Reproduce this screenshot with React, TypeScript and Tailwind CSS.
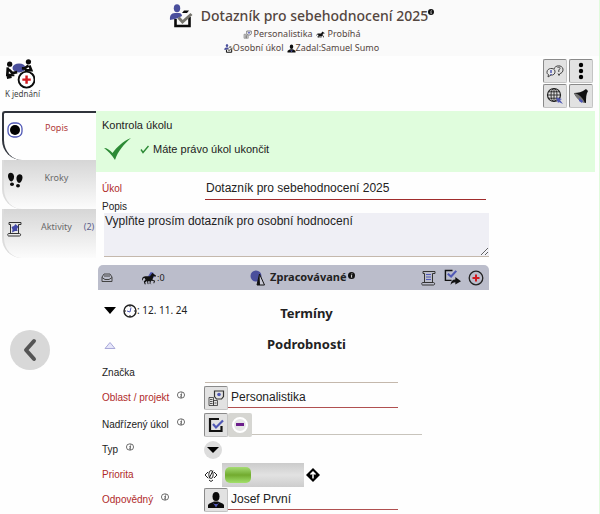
import type { ReactNode } from 'react';

interface IconProps {
  className?: string;
}

function TaskIcon({ className }: IconProps) {
  return (
    <svg viewBox="0 0 24 24" className={className} aria-hidden="true">
      <path d="M6.500 15v7h14v-9" fill="none" stroke="#0b0b0b" strokeWidth="2.600" />
      <path d="M13 9l2-2.500h5L18 9z" fill="#0b0b0b" />
      <ellipse cx="8" cy="4.200" rx="3.200" ry="4" fill="#4a4f9c" />
      <path d="M1 16c-.5-4 1-7 5-7h4c2 0 3 1.500 3 3l-4 2-3 1z" fill="#4a4f9c" />
      <path d="M9.500 13.500l4 4.500 9-8" fill="none" stroke="#77766f" strokeWidth="3" />
    </svg>
  );
}

function ProjectIcon({ className }: IconProps) {
  return (
    <svg viewBox="0 0 18 18" className={className} fill="none" stroke="#333" aria-hidden="true">
      <path d="M7.500 2h9v5.500l-2 2.500H9.500l-2-2.500z" strokeWidth="1.200" />
      <circle cx="12" cy="5.500" r="1.800" fill="#5058b5" stroke="none" />
      <path d="M2 8.500h4.500V16.500H2zM6.500 11.500h4v5h-4zM3 10.500h2.500M3 12.500h2.500M3 14.500h2.500M7.500 14h2" strokeWidth="0.800" />
    </svg>
  );
}

function HorseIcon({ className, accent }: IconProps & { accent?: boolean }) {
  return (
    <svg viewBox="0 0 18 16" className={className} aria-hidden="true">
      {accent && <path d="M8 6l3-5 3 1 1 5-4 2z" fill="#5058b5" />}
      <path
        d="M1 10c0-3 2-4 4-4h5l3-4 1 1 3 2-.5 1.500L14 6l-1 4 3 1-1 3h-1l.5-2.500-3-.5-2 1-3-.5-2 1.500 1 2H4L3 12l2-2-1-2c-2 0-2 1-2 3z"
        fill="#111"
      />
      <path d="M7 11l1 4M11 11l-1 3 1 1" stroke="#111" fill="none" />
    </svg>
  );
}

function PersonIcon({ className }: IconProps) {
  return (
    <svg viewBox="0 0 18 18" className={className} aria-hidden="true">
      <ellipse cx="9" cy="5.500" rx="3.500" ry="4.500" fill="#0b0b0b" />
      <path d="M1 17v-3c1-2 4-2.500 6-3.500h4c2 1 5 1.500 6 3.500v3z" fill="#0b0b0b" />
      <path d="M5.500 11l3.500 5.500 3.500-5.500-2 2h-3z" fill="#5058b5" />
    </svg>
  );
}

function MeetingIcon({ className }: IconProps) {
  return (
    <svg viewBox="0 0 32 32" className={className} aria-hidden="true">
      <ellipse cx="15" cy="9.500" rx="7" ry="4.800" fill="#4a4f9c" />
      <circle cx="5" cy="5.500" r="2.800" fill="#0b0b0b" />
      <circle cx="25" cy="3" r="2.800" fill="#0b0b0b" />
      <path d="M3 9l-.5 8H10M4 11l4 4 5-1M2 20l5-1M26 7l2 5h-7M25 7l-4 3-3 0" fill="none" stroke="#0b0b0b" strokeWidth="2.800" />
      <circle cx="23" cy="22" r="8.500" fill="#fff" stroke="#0b0b0b" strokeWidth="2" />
      <path d="M23 17.500v9M18.500 22h9" stroke="#d0191f" strokeWidth="2.600" />
    </svg>
  );
}

function ChatIcon() {
  return (
    <svg viewBox="0 0 18 18" className="size-[18px]" fill="none" stroke="#444" aria-hidden="true">
      <path d="M8 7c1-4 8-4.500 9 0 .5 3-2 4.500-3 4.500l-1 2-1-2" />
      <path d="M1 10c0-4 7-5 8-1 .5 3-2 4.500-4 4l-3 2 .5-2.500C1 12 1 11 1 10z" fill="#e8e8e8" />
      <path d="M5 8v3M5 12v1" stroke="#5058b5" strokeWidth="1.500" />
      <path d="M11.500 6c.5-1.500 3-1 2.500.5L12.800 8v2" />
    </svg>
  );
}

function GlobeIcon() {
  return (
    <svg viewBox="0 0 18 18" className="size-[18px]" fill="none" stroke="#222" aria-hidden="true">
      <circle cx="8" cy="8" r="6.500" strokeWidth="1.200" />
      <ellipse cx="8" cy="8" rx="3" ry="6.500" strokeWidth="0.900" />
      <path d="M1.500 8h13M8 1.500v13M3 4.800h10M3 11.200h10" strokeWidth="0.900" />
      <path d="M10 10.500l6 1.500-2 1 3 4-4-2-1 1z" fill="#5058b5" stroke="none" />
    </svg>
  );
}

function BellIcon() {
  return (
    <svg viewBox="0 0 18 18" className="size-[18px]" aria-hidden="true">
      <path d="M2 6c4 0 8-1 12-4l2 2c-2 3-2 7-2 12C9 15 4 11 2 6z" fill="#111" />
      <path d="M2 6c5 1 9 5 11 10-5-1-9-5-11-10z" fill="#777" />
      <path d="M7 11l4 3-1 2-3-2z" fill="#5058b5" />
    </svg>
  );
}

function ScrollIcon({ className, stamp }: IconProps & { stamp?: boolean }) {
  return (
    <svg viewBox="0 0 16 16" className={className} fill="none" stroke="#333" aria-hidden="true">
      <path d="M3.500 13V3.500M3.500 3.500H2V1.500h12v2h-2.500M11.500 3.500V13" />
      <path d="M3.500 12.500H1.500c-1 0-1 2.500 0 2.500h11c1.500 0 1.500-2.500 0-2.500H4" />
      {stamp ? (
        <path d="M4.500 6l2.500-1 1.500-2 1.500 1.500 1.500 1L10 8l.5 2L8 10l-3 1.500.5-3z" fill="#4148a5" stroke="none" />
      ) : (
        <path d="M5 4.500h5M5 7h5M5 9.500h5" stroke="#5058b5" />
      )}
    </svg>
  );
}

function CheckBoxIcon({ className, forward }: IconProps & { forward?: boolean }) {
  return (
    <svg viewBox="0 0 18 18" className={className} fill="none" aria-hidden="true">
      <path d={forward ? 'M9 1.500H1.500v10.500H8' : 'M12 3H3v12h11.500V10'} stroke="#111" strokeWidth={forward ? 1.5 : 2.2} />
      <path d={forward ? 'M4 5l3.500 3L13 2' : 'M6 8l3 3.500L16 4.500'} stroke="#5058b5" strokeWidth="2.200" />
      {forward && <path d="M7 17c0-4 2-6 5-6V8.500l6 4.500-6 3.500V14c-2 0-4 1-5 3z" fill="#111" />}
    </svg>
  );
}

function PlusCircleIcon({ className }: IconProps) {
  return (
    <svg viewBox="0 0 16 16" className={className} fill="none" aria-hidden="true">
      <circle cx="8" cy="8" r="6.800" stroke="#222" strokeWidth="1.300" />
      <path d="M8 4.500v7M4.500 8h7" stroke="#d0191f" strokeWidth="2" />
    </svg>
  );
}

function CheckMark({ className }: IconProps) {
  return (
    <svg viewBox="0 0 27 22" className={className} aria-hidden="true">
      <path d="M0 10c3 0 6 2 8.500 5C13 9 19 3 27 0 20 6 14 13 11 22 8 17 4 13 0 10z" fill="#2c8a35" />
    </svg>
  );
}

function FootstepsIcon() {
  return (
    <svg viewBox="0 0 16 16" className="size-4" fill="#0b0b0b" aria-hidden="true">
      <path d="M1 4c0-4 5-4.500 6 0 .3 2-.5 5-2.500 5.500C2.500 9.500 1 6 1 4z" />
      <ellipse cx="5" cy="12.200" rx="2" ry="1.800" />
      <path d="M15.500 5.500c0-4-5-4.500-6 0-.3 2 .5 5 2.500 5.500 2 0 3.500-3.500 3.500-5.500z" />
      <ellipse cx="11" cy="13.700" rx="2" ry="1.800" />
    </svg>
  );
}

function InfoMark({ className }: IconProps) {
  return (
    <svg viewBox="0 0 8 8" className={className} aria-hidden="true">
      <circle cx="4" cy="4" r="4" fill="#111" />
      <path d="M4.500 1.500v1M3.300 3.500h1L3.800 6h1" stroke="#fff" strokeWidth="0.900" fill="none" />
    </svg>
  );
}

function HelpMark() {
  return (
    <svg viewBox="0 0 8 8" className="mb-[6px] size-2" fill="none" stroke="#333" aria-hidden="true">
      <ellipse cx="4" cy="4" rx="3.600" ry="3.200" strokeWidth="0.700" />
      <path d="M4.800 1.500l-.2 1M3.500 3.500h1L3.800 6.200h1" strokeWidth="0.900" />
    </svg>
  );
}

function ToolButton({ label, children }: { label: string; children: ReactNode }) {
  return (
    <button
      type="button"
      aria-label={label}
      className="flex size-6 shrink-0 items-center justify-center rounded-[2px] border border-t-[#8a8a8a] border-r-[#c4c4c4] border-b-[#c4c4c4] border-l-[#8a8a8a] bg-[#e2e2e2]"
    >
      {children}
    </button>
  );
}

interface TabProps {
  label: string;
  icon: ReactNode;
  count?: number;
  active?: boolean;
}

function Tab({ label, icon, count, active }: TabProps) {
  return (
    <button
      type="button"
      className={`flex h-[49px] w-full items-start rounded-bl-[20px] border-l-2 pl-[3px] text-[9px] leading-[18px] ${
        active
          ? 'rounded-tl-[3px] border-t-2 border-[#30343c] pt-[6px] text-[#b03a3a]'
          : 'border-[#dcdcdc] bg-linear-to-b from-[#d6d6d6] to-[#fcfcfc] pt-[9px] text-[#6a6a6a]'
      }`}
    >
      <span className="mt-[3px] flex w-4 shrink-0 justify-center">{icon}</span>
      <span className="flex-1 pl-2 text-center">{label}</span>
      <span className="w-[14px] shrink-0 text-[#5d5f8d]">{count ? `(${count})` : ''}</span>
    </button>
  );
}

interface FieldRowProps {
  label: string;
  htmlFor: string;
  required?: boolean;
  help?: boolean;
  children: ReactNode;
}

function FieldRow({ label, htmlFor, required, help, children }: FieldRowProps) {
  return (
    <div className="flex h-[25px] items-center">
      <div className="flex w-[102px] shrink-0 items-center gap-2">
        <label htmlFor={htmlFor} className={`text-[10px] ${required ? 'text-[#b02a2a]' : 'text-[#222]'}`}>
          {label}
        </label>
        {help && <HelpMark />}
      </div>
      {children}
    </div>
  );
}

const TABS: TabProps[] = [
  {
    label: 'Popis',
    active: true,
    icon: (
      <svg viewBox="0 0 16 16" className="size-4" aria-hidden="true">
        <rect x="1" y="1" width="14" height="14" rx="5.500" fill="#fff" stroke="#5058b5" strokeWidth="1.300" />
        <circle cx="8" cy="8" r="5" />
      </svg>
    ),
  },
  { label: 'Kroky', icon: <FootstepsIcon /> },
  { label: 'Aktivity', count: 2, icon: <ScrollIcon className="size-4" stamp /> },
];

const inputClass = 'h-[21px] border-b bg-transparent px-[3px] text-[12px] text-[#222] outline-none';

export default function App() {
  return (
    <div className="min-h-screen border-r border-[#e0fbdc] bg-[#fefefe] font-['Liberation_Sans',sans-serif] text-[11px] text-[#222]">
      <header className="flex h-14 flex-col items-center bg-[#fafafa] pl-1 font-['Noto_Sans',sans-serif] text-[#54463f]">
        <div className="flex h-[27px] items-center pt-1">
          <TaskIcon className="mr-2 size-6" />
          <h1 className="text-[14px] leading-5 font-medium">Dotazník pro sebehodnocení 2025</h1>
          <InfoMark className="mb-2 size-[6px]" />
        </div>
        <div className="flex items-center text-[9px] leading-[14px]">
          <ProjectIcon className="mr-[2px] size-[9px]" />
          Personalistika
          <HorseIcon className="mx-[3px] h-[9px] w-[9px]" />
          Probíhá
        </div>
        <div className="flex items-center text-[9px] leading-[14px]">
          <TaskIcon className="size-[9px]" />
          Osobní úkol
          <PersonIcon className="ml-[3px] size-[9px]" />
          Zadal:Samuel Sumo
        </div>
      </header>

      <div className="flex h-[55px] items-start justify-between pt-[3px] pr-[6px] pl-[5px]">
        <button type="button" className="flex flex-col items-start font-['Noto_Sans',sans-serif] text-[8px] leading-[10px] text-[#444]">
          <MeetingIcon className="size-[30px]" />
          K jednání
        </button>
        <div className="grid grid-cols-2 gap-x-[2px] gap-y-px">
          <ToolButton label="Diskuse">
            <ChatIcon />
          </ToolButton>
          <ToolButton label="Další">
            <svg viewBox="0 0 18 18" className="size-[18px]" aria-hidden="true">
              <circle cx="9" cy="3" r="2.200" />
              <circle cx="9" cy="9" r="2.200" />
              <circle cx="9" cy="15" r="2.200" />
            </svg>
          </ToolButton>
          <ToolButton label="Web">
            <GlobeIcon />
          </ToolButton>
          <ToolButton label="Upozornění">
            <BellIcon />
          </ToolButton>
        </div>
      </div>

      <div className="flex items-start pl-[2px]">
        <aside className="w-[94px] shrink-0 font-['Noto_Sans',sans-serif]">
          <nav>
            {TABS.map((tab) => (
              <Tab key={tab.label} {...tab} />
            ))}
          </nav>
          <button
            type="button"
            aria-label="Zpět"
            className="mt-[72px] ml-2 flex size-10 items-center justify-center rounded-full bg-[#d8d8d8]"
          >
            <svg viewBox="0 0 20 24" className="h-6 w-5" fill="none" stroke="#555" strokeWidth="4" strokeLinecap="round" strokeLinejoin="round" aria-hidden="true">
              <path d="M14 3L6 12l8 9" />
            </svg>
          </button>
        </aside>

        <main className="min-w-0 flex-1">
          <section className="mr-1 h-[61px] bg-[#e0fddd] px-[6px] pt-[6px]">
            <p className="leading-4">Kontrola úkolu</p>
            <div className="mt-1 flex items-center">
              <CheckMark className="ml-[2px] h-6 w-[27px]" />
              <svg viewBox="0 0 9 9" className="mr-1 ml-[9px] size-[9px]" fill="none" stroke="#2c8a35" aria-hidden="true">
                <path d="M1 4.500L3 7.500 8.500 1" strokeWidth="1.400" />
              </svg>
              Máte právo úkol ukončit
            </div>
          </section>

          <form className="ml-[2px] max-w-[391px]">
            <div className="flex h-7 items-end pl-1">
              <label htmlFor="ukol" className="w-[103px] shrink-0 pb-1 text-[10px] text-[#b02a2a]">
                Úkol
              </label>
              <input
                id="ukol"
                defaultValue="Dotazník pro sebehodnocení 2025"
                className="mr-[3px] h-6 min-w-0 flex-1 border-b border-[#a02c2c] bg-transparent px-px text-[12px] text-[#222] outline-none"
              />
            </div>
            <label htmlFor="popis" className="block pt-px pl-1 text-[10px] leading-3">
              Popis
            </label>
            <div className="pl-[6px]">
              <textarea
                id="popis"
                defaultValue="Vyplňte prosím dotazník pro osobní hodnocení"
                className="block h-11 w-full border-b border-[#c4b8ac] bg-[#efeff5] px-px text-[12px] leading-4 text-[#222] outline-none"
              />
            </div>

            <div className="mt-2 flex h-[25px] items-center rounded-t-[5px] bg-[#bbbdcb] px-[3px] font-['Noto_Sans',sans-serif]">
              <svg viewBox="0 0 12 12" className="size-3" fill="none" stroke="#444" aria-hidden="true">
                <path d="M1 5l2-3h6l2 3v4.500H1zM1 5.500l3 2h4l3-2M3 4h6" />
              </svg>
              <div className="ml-7 flex items-center text-[9px]">
                <HorseIcon className="h-[14px] w-4" accent />
                :0
              </div>
              <div className="flex flex-1 items-center justify-center pl-5">
                <svg viewBox="0 0 16 16" className="mr-1 size-4" aria-hidden="true">
                  <circle cx="6" cy="6" r="5.500" fill="#4a4f9c" />
                  <path d="M9.500 4l5 11H7z" fill="#c9cad6" stroke="#111" />
                  <path d="M9.500 4l.5 11H7z" fill="#111" />
                </svg>
                <h2 className="text-[11px] font-bold">Zpracovávané</h2>
                <InfoMark className="mb-1 ml-[2px] size-[7px]" />
              </div>
              <div className="flex items-center gap-[7px] pr-[2px]">
                <button type="button" aria-label="Protokol">
                  <ScrollIcon className="size-4" />
                </button>
                <button type="button" aria-label="Předat">
                  <CheckBoxIcon className="size-[17px]" forward />
                </button>
                <button type="button" aria-label="Přidat">
                  <PlusCircleIcon className="size-4" />
                </button>
              </div>
            </div>

            <div className="mt-2 grid h-8 grid-cols-[1fr_auto_1fr] items-center pr-[6px] pl-[6px] font-['Noto_Sans',sans-serif]">
              <div className="flex items-center self-start pt-[5px] text-[10px]">
                <button type="button" aria-label="Rozbalit termíny">
                  <svg viewBox="0 0 12 7" className="mr-[7px] h-[7px] w-3" aria-hidden="true">
                    <path d="M0 0h12L6 7z" />
                  </svg>
                </button>
                <svg viewBox="0 0 14 14" className="size-[14px]" fill="none" stroke="#222" aria-hidden="true">
                  <circle cx="7" cy="7" r="6" strokeWidth="1.400" />
                  <path d="M7 1v2M7 11v2M1 7h2M11 7h2" />
                  <path d="M8 3.500L7 8l-3-1" stroke="#5058b5" />
                </svg>
                : 12. 11. 24
              </div>
              <h2 className="pl-[26px] text-[13px] font-bold">Termíny</h2>
            </div>
            <div className="grid h-[30px] grid-cols-[1fr_auto_1fr] items-center pr-[6px] pl-[6px] font-['Noto_Sans',sans-serif]">
              <button type="button" aria-label="Sbalit podrobnosti" className="justify-self-start">
                <svg viewBox="0 0 12 7" className="h-[7px] w-3" aria-hidden="true">
                  <path d="M1 6.500h10L6 .5z" fill="#e6e6fa" stroke="#a9a9d8" />
                </svg>
              </button>
              <h2 className="pl-[26px] text-[13px] font-bold">Podrobnosti</h2>
            </div>

            <div className="pl-1">
              <FieldRow label="Značka" htmlFor="znacka">
                <input id="znacka" className={`${inputClass} ml-px w-[193px] border-[#c4b8ac]`} />
              </FieldRow>
              <FieldRow label="Oblast / projekt" htmlFor="oblast" required help>
                <ToolButton label="Vybrat oblast">
                  <ProjectIcon className="size-[18px]" />
                </ToolButton>
                <input id="oblast" defaultValue="Personalistika" className={`${inputClass} w-[170px] border-[#b05050]`} />
              </FieldRow>
              <div className="pt-[2px]">
                <FieldRow label="Nadřízený úkol" htmlFor="nadrizeny" help>
                  <ToolButton label="Vybrat úkol">
                    <CheckBoxIcon className="size-[18px]" />
                  </ToolButton>
                  <button
                    type="button"
                    aria-label="Odebrat úkol"
                    className="flex size-6 items-center justify-center rounded-[2px] bg-[#d6d6d2]"
                  >
                    <span className="flex size-4 items-center justify-center rounded-full border-2 border-white bg-[#e6e6e6]">
                      <span className="h-[3px] w-2 bg-[#6c1d8c]" />
                    </span>
                  </button>
                  <input id="nadrizeny" className={`${inputClass} w-[170px] border-[#c8c4bc]`} />
                </FieldRow>
              </div>
              <FieldRow label="Typ" htmlFor="typ" help>
                <button
                  id="typ"
                  type="button"
                  aria-label="Typ"
                  className="flex size-[18px] items-center justify-center rounded-full bg-[#dcdcdc]"
                >
                  <svg viewBox="0 0 12 6" className="h-[6px] w-3" aria-hidden="true">
                    <path d="M0 0h12L6 6z" />
                  </svg>
                </button>
              </FieldRow>
              <FieldRow label="Priorita" htmlFor="priorita" required>
                <svg viewBox="0 0 14 14" className="mr-1 size-[14px]" fill="none" stroke="#222" aria-hidden="true">
                  <path d="M4 4L1 7l3 3M10 4l3 3-3 3M5 12l2 1.500L9 12" />
                  <ellipse cx="7" cy="6.500" rx="2.200" ry="4" />
                  <path d="M5 10.500l4-8" />
                </svg>
                <input
                  id="priorita"
                  type="range"
                  min={0}
                  max={10}
                  defaultValue={0}
                  className="h-6 w-[82px] appearance-none bg-linear-to-b from-[#cbcbcb] via-[#e2e2e2] to-[#cdcdcd] px-[3px] [&::-webkit-slider-thumb]:h-4 [&::-webkit-slider-thumb]:w-[26px] [&::-webkit-slider-thumb]:appearance-none [&::-webkit-slider-thumb]:rounded-[5px] [&::-webkit-slider-thumb]:bg-linear-to-b [&::-webkit-slider-thumb]:from-[#a5dc72] [&::-webkit-slider-thumb]:via-[#72ab2e] [&::-webkit-slider-thumb]:to-[#a2e06a]"
                />
                <svg viewBox="0 0 14 14" className="ml-[2px] size-[14px]" aria-hidden="true">
                  <path d="M7 0l7 7-7 7-7-7z" />
                  <path d="M7 10.500V5M4.500 6.500L7 4l2.500 2.500" fill="none" stroke="#fff" strokeWidth="1.500" />
                </svg>
              </FieldRow>
              <FieldRow label="Odpovědný" htmlFor="odpovedny" required help>
                <ToolButton label="Vybrat osobu">
                  <PersonIcon className="size-[18px]" />
                </ToolButton>
                <input id="odpovedny" defaultValue="Josef První" className={`${inputClass} w-[170px] border-[#b05050]`} />
              </FieldRow>
            </div>
          </form>
        </main>
      </div>
    </div>
  );
}
